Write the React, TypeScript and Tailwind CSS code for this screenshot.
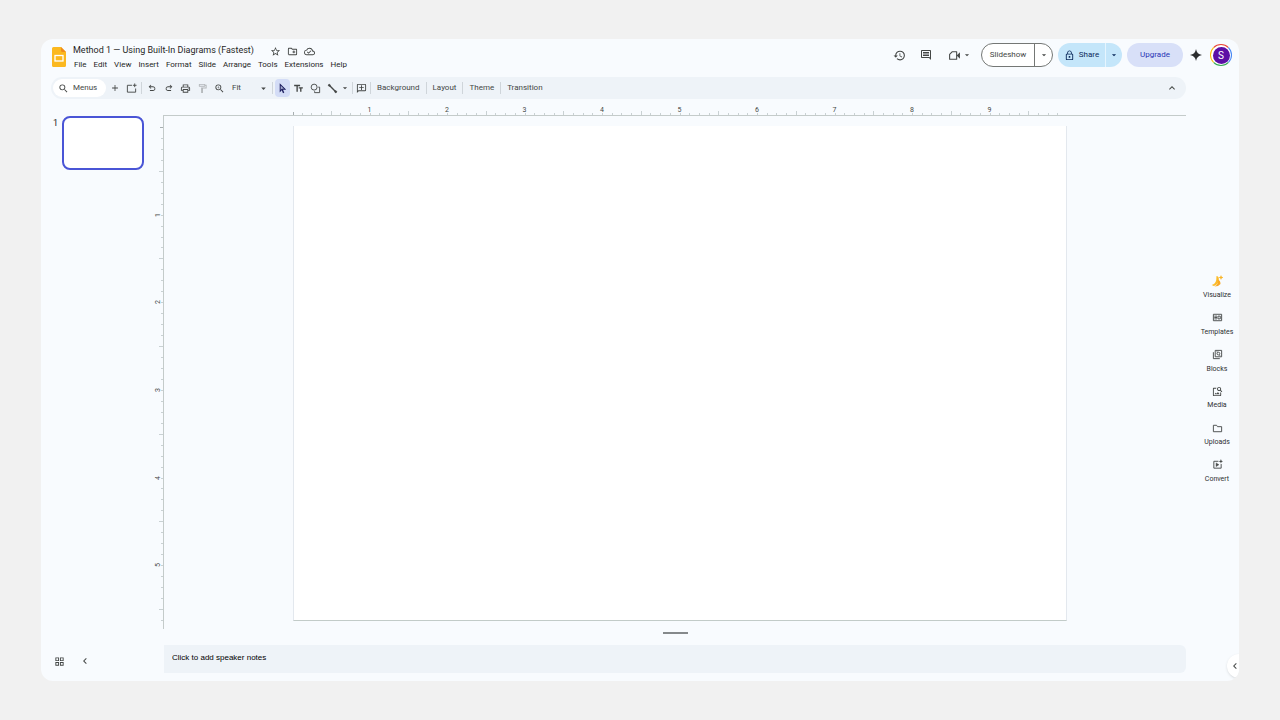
import React from "react";
import {
  MdAdd,
  MdArrowDropDown,
  MdChevronLeft,
  MdExpandLess,
  MdHistory,
  MdLockOutline,
  MdOutlineAddComment,
  MdOutlineCloudDone,
  MdOutlineComment,
  MdOutlineCreateNewFolder,
  MdOutlineFormatPaint,
  MdOutlineGridView,
  MdOutlineImageSearch,
  MdOutlinePrint,
  MdSearch,
  MdStarBorder,
  MdTextFields,
  MdZoomIn,
} from "react-icons/md";

const MENUS = ["File", "Edit", "View", "Insert", "Format", "Slide", "Arrange", "Tools", "Extensions", "Help"];

const UndoIcon = ({ className = "" }: { className?: string }) => (
  <svg viewBox="0 -960 960 960" className={`size-[10px] ${className}`} fill="currentColor">
    <path d="M280-200v-80h284q63 0 109.500-40T720-420q0-60-46.500-100T564-560H312l104 104-56 56-200-200 200-200 56 56-104 104h252q97 0 166.500 63T800-420q0 94-69.500 157T564-200H280Z" />
  </svg>
);

const Stroke = ({ children, className = "size-[11px]" }: { children: React.ReactNode; className?: string }) => (
  <svg viewBox="0 0 24 24" className={className} fill="none" stroke="currentColor" strokeWidth="2">
    {children}
  </svg>
);

const SlidesLogo = () => (
  <svg viewBox="0 0 14 20" className="h-5 w-[14px]">
    <path d="M1.500 0H9l5 5v13.500A1.500 1.500 0 0 1 12.500 20h-11A1.500 1.500 0 0 1 0 18.500v-17A1.500 1.500 0 0 1 1.500 0Z" fill="#fbb81f" />
    <path d="M9 0l5 5H10.500A1.500 1.500 0 0 1 9 3.500Z" fill="#f08c1d" />
    <rect x="3" y="8.500" width="8" height="5.500" fill="none" stroke="#fff" strokeWidth="1.300" />
  </svg>
);

const MeetIcon = () => (
  <svg viewBox="0 0 24 24" className="size-[13px]">
    <path d="M8 5h8v14H3V10Z" fill="none" stroke="currentColor" strokeWidth="2" strokeLinejoin="round" />
    <path d="M16 12l6-6v12Z" fill="currentColor" />
  </svg>
);

const NewSlideIcon = () => (
  <Stroke>
    <path d="M13 5H3v15h18v-8M19 1v8M15 5h8" />
  </Stroke>
);

const ShapeIcon = () => (
  <Stroke>
    <circle cx="9" cy="9" r="6.500" />
    <path d="M18 9h3v12H10V18" />
  </Stroke>
);

const LineIcon = () => (
  <Stroke>
    <path d="M5 5l14 14" strokeWidth="3" />
    <circle cx="5" cy="5" r="2" fill="currentColor" />
    <circle cx="19" cy="19" r="2" fill="currentColor" />
  </Stroke>
);

const PANEL = [
  {
    label: "Visualize",
    icon: (
      <svg viewBox="0 0 24 24" className="size-3">
        <path d="M11 2c3 0 4 2 4.500 4 1 7-2 14-10 16l-4-2c5-1 8-5 9-10Z" fill="#fbbc2c" />
        <path d="M13 9c5 1 6 5 6 9l-5 4-7 1c6-3 8-7 6-14Z" fill="#f9a825" />
        <path d="M20 0l1.500 3.500L25 5l-3.500 1.500L20 10l-1.500-3.500L15 5l3.500-1.500Z" fill="#f9b52a" />
      </svg>
    ),
  },
  {
    label: "Templates",
    icon: (
      <Stroke>
        <path d="M3 5h18v14H3Z" />
        <path d="M5 9h6M5 12h6M5 15h6M13 9h5v6h-5Z" />
      </Stroke>
    ),
  },
  {
    label: "Blocks",
    icon: (
      <Stroke>
        <path d="M7 3h14v14H7ZM3 7v14h14" />
        <circle cx="14" cy="10" r="3" />
        <path d="M10 6h2M16 14h2" />
      </Stroke>
    ),
  },
  { label: "Media", icon: <MdOutlineImageSearch className="size-[11px]" /> },
  {
    label: "Uploads",
    icon: (
      <Stroke>
        <path d="M3 5h7l2 3h9v11H3Z" />
      </Stroke>
    ),
  },
  {
    label: "Convert",
    icon: (
      <Stroke>
        <path d="M14 5H4v15h16v-9" />
        <path d="M9 8.500v8l6-4Z" fill="currentColor" strokeWidth="1" />
        <path d="M19.500 0l1.300 3.700L24.500 5l-3.700 1.300L19.500 10l-1.300-3.700L14.500 5l3.700-1.300Z" fill="currentColor" stroke="none" />
      </Stroke>
    ),
  },
];

const ToolButton = ({ label, children, className = "w-[17px]" }: { label: string; children: React.ReactNode; className?: string }) => (
  <button aria-label={label} className={`flex h-[18px] shrink-0 items-center justify-center ${className}`}>
    {children}
  </button>
);

const Divider = ({ className = "" }: { className?: string }) => <span className={`h-3 w-px shrink-0 bg-[#cfd5da] ${className}`} />;

function Header() {
  return (
    <header className="flex h-[38px] shrink-0 items-start pl-[11px] pr-[7px]">
      <a href="#home" aria-label="Slides home" className="mt-2">
        <SlidesLogo />
      </a>
      <div className="ml-[7px] mt-[5px]">
        <div className="flex h-[14px] items-center text-[#444746]">
          <h1 className="mr-4 whitespace-nowrap text-[9px] text-[#1f1f1f]">
            Method 1 — Using Built-In Diagrams (Fastest)
          </h1>
          <button aria-label="Star" className="mr-[6px]"><MdStarBorder className="size-[11px]" /></button>
          <button aria-label="Move" className="mr-[6px]"><MdOutlineCreateNewFolder className="size-[11px]" /></button>
          <button aria-label="Saved to cloud"><MdOutlineCloudDone className="size-[11px]" /></button>
        </div>
        <nav className="ml-px flex h-[14px] items-center gap-[7px] text-[8px] text-[#1f1f1f]">
          {MENUS.map((m) => (
            <button key={m}>{m}</button>
          ))}
        </nav>
      </div>
      <div className="ml-auto mt-1 flex h-6 shrink-0 items-center text-[8px] text-[#444746]">
        <button aria-label="History" className="mr-[14px]"><MdHistory className="size-[13px]" /></button>
        <button aria-label="Comments" className="mr-4"><MdOutlineComment className="size-3" /></button>
        <button aria-label="Meet" className="mr-[9px] flex items-center gap-px">
          <MeetIcon />
          <MdArrowDropDown className="size-[10px]" />
        </button>
        <div className="mr-[5px] flex h-6 w-[72px] rounded-full border border-[#747775] bg-white">
          <button className="flex-1 border-r border-[#747775]">Slideshow</button>
          <button aria-label="Slideshow options" className="flex w-[17px] items-center justify-center"><MdArrowDropDown className="size-[10px]" /></button>
        </div>
        <div className="mr-[5px] flex h-6 w-16 rounded-full bg-[#c4e6fa] text-[#0b2a5b]">
          <button className="flex flex-1 items-center justify-center gap-1 border-r border-[#e6f5fe]">
            <MdLockOutline className="size-[11px]" />
            Share
          </button>
          <button aria-label="Share options" className="flex w-4 items-center justify-center pr-px"><MdArrowDropDown className="size-[10px]" /></button>
        </div>
        <button className="mr-[7px] h-6 w-14 rounded-full bg-[#d8e0f8] text-[#2a35b5]">Upgrade</button>
        <button aria-label="Gemini" className="mr-2 text-[#2b2d2f]">
          <svg viewBox="0 0 24 24" className="size-3" fill="currentColor">
            <path d="M12 0c1 7 5 11 12 12-7 1-11 5-12 12-1-7-5-11-12-12 7-1 11-5 12-12Z" />
          </svg>
        </button>
        <button aria-label="Account" className="flex size-[22px] items-center justify-center rounded-full border border-t-[#ea4335] border-r-[#4285f4] border-b-[#34a853] border-l-[#fbbc04] bg-white">
          <span className="flex size-[17px] items-center justify-center rounded-full bg-[#5b0fa5] text-[10px] text-white">S</span>
        </button>
      </div>
    </header>
  );
}

function Toolbar() {
  return (
    <div className="ml-[10px] mr-[53px] flex h-[22px] shrink-0 items-center rounded-full bg-[#eef3f8] pl-[2px] pr-2 text-[8px] text-[#444746]">
      <button className="flex h-[18px] w-[53px] items-center gap-1 rounded-full bg-white pl-[5px]">
        <MdSearch className="size-[11px]" />
        Menus
      </button>
      <ToolButton label="Add"><MdAdd className="size-[10px]" /></ToolButton>
      <ToolButton label="New slide"><NewSlideIcon /></ToolButton>
      <Divider className="mx-px" />
      <ToolButton label="Undo"><UndoIcon /></ToolButton>
      <ToolButton label="Redo"><UndoIcon className="-scale-x-100" /></ToolButton>
      <ToolButton label="Print"><MdOutlinePrint className="size-[11px]" /></ToolButton>
      <ToolButton label="Paint format"><MdOutlineFormatPaint className="size-[11px] text-[#b3b7ba]" /></ToolButton>
      <ToolButton label="Zoom"><MdZoomIn className="size-[11px]" /></ToolButton>
      <button className="flex w-[41px] items-center justify-between pl-1">
        Fit
        <MdArrowDropDown className="size-[11px]" />
      </button>
      <Divider className="ml-[3px] mr-[2px]" />
      <ToolButton label="Select" className="w-[15px] rounded-sm bg-[#d3dcf6] text-[#1b1c5e]">
        <svg viewBox="0 0 24 24" className="size-[11px]" fill="none" stroke="currentColor" strokeWidth="2.200">
          <path d="M7 3v15l4-4.500h6.500Z" fill="currentColor" fillOpacity=".25" />
          <path d="M11 13.500l3.500 8" strokeWidth="3" />
        </svg>
      </ToolButton>
      <ToolButton label="Text box"><MdTextFields className="size-[11px]" /></ToolButton>
      <ToolButton label="Shape"><ShapeIcon /></ToolButton>
      <ToolButton label="Line"><LineIcon /></ToolButton>
      <ToolButton label="Line options" className="w-2"><MdArrowDropDown className="size-[10px] shrink-0" /></ToolButton>
      <Divider className="ml-[3px]" />
      <ToolButton label="Add comment"><MdOutlineAddComment className="size-[11px] -scale-x-100" /></ToolButton>
      <Divider className="mr-[6px]" />
      <button>Background</button>
      <Divider className="mx-[6px]" />
      <button>Layout</button>
      <Divider className="mx-[6px]" />
      <button>Theme</button>
      <Divider className="mx-[6px]" />
      <button>Transition</button>
      <button aria-label="Hide menus" className="ml-auto"><MdExpandLess className="size-3" /></button>
    </div>
  );
}

function HorizontalRuler() {
  return (
    <div className="flex h-[17px] shrink-0 border-b border-[#c4cbca] pl-[129px] pr-[119px]">
      <div className="flex flex-1 items-end">
        <span className="-mr-px h-[3px] w-px bg-[#a7aeb0]" />
        {Array.from({ length: 79 }, (_, i) => i + 1).map((n) => (
          <span
            key={n}
            className={`relative flex-1 border-r border-[#c9d1d3] ${n % 8 === 4 ? "h-1" : "h-[2px]"}`}
          >
            {n % 8 === 0 && (
              <span className="absolute -right-[6px] bottom-[1px] w-3 text-center text-[7px] leading-[8px] text-[#444746]">{n / 8}</span>
            )}
          </span>
        ))}
        <span className="flex-1" />
      </div>
    </div>
  );
}

function VerticalRuler() {
  return (
    <div className="flex w-3 shrink-0 flex-col items-end border-r border-[#c4cbca] pb-2 pt-3">
      <span className="h-px w-[3px] bg-[#a7aeb0]" />
      {Array.from({ length: 45 }, (_, i) => i + 1).map((n) => (
        <span
          key={n}
          className={`relative flex-1 border-b border-[#c9d1d3] ${n % 8 === 4 ? "w-1" : "w-[2px]"}`}
        >
          {n % 8 === 0 && (
            <span className="absolute -bottom-1 right-px h-2 w-2 -rotate-90 text-center text-[7px] leading-[8px] text-[#444746]">{n / 8}</span>
          )}
        </span>
      ))}
    </div>
  );
}

export default function App() {
  return (
    <div className="flex min-h-screen bg-[#f1f1f1] px-[41px] py-[39px] font-['Roboto','Liberation_Sans',sans-serif]">
      <div className="relative flex min-w-0 flex-1 flex-col overflow-hidden rounded-xl bg-[#f8fbfe]">
        <Header />
        <Toolbar />
        <div className="flex min-h-0 flex-1">
          <aside className="flex w-[123px] shrink-0 flex-col">
            <div className="flex flex-1 pt-4">
              <ol className="flex-1 pt-px">
                <li className="flex gap-1">
                  <span className="w-[17px] pt-px text-right text-[9px] leading-3 text-[#1f1f1f]">1</span>
                  <button aria-label="Slide 1" className="h-[54px] w-[82px] shrink-0 rounded-lg border-2 border-[#4a55d6] bg-white" />
                </li>
              </ol>
              <VerticalRuler />
            </div>
            <div className="flex h-[52px] items-center gap-[14px] pl-[13px] pt-3 text-[#444746]">
              <button aria-label="Grid view"><MdOutlineGridView className="size-[11px]" /></button>
              <button aria-label="Hide filmstrip"><MdChevronLeft className="size-3" /></button>
            </div>
          </aside>
          <main className="flex min-w-0 flex-1 flex-col">
            <HorizontalRuler />
            <div className="flex flex-1 pb-2 pl-[129px] pr-[119px] pt-[10px]">
              <section aria-label="Slide canvas" className="flex-1 border-x border-b border-x-[#e3e8ee] border-b-[#c2cbc8] bg-white" />
            </div>
            <div className="flex h-4 shrink-0 justify-center pt-[3px]">
              <span className="h-[2px] w-[25px] bg-[#85898b]" />
            </div>
            <div className="mb-2 flex h-7 shrink-0 items-center rounded-r-md bg-[#eef3f8] pl-2">
              <input
                aria-label="Speaker notes"
                placeholder="Click to add speaker notes"
                className="w-full bg-transparent pb-[2px] font-['Liberation_Sans',sans-serif] text-[8px] text-black outline-none placeholder:text-black"
              />
            </div>
          </main>
          <aside className="flex w-[53px] shrink-0 flex-col pl-[9px] pt-[176px]">
            <div className="flex h-[209px] flex-col justify-between text-[7px] text-[#2d2f31]">
              {PANEL.map((p) => (
                <button key={p.label} className="flex flex-col items-center gap-[3px] leading-[10px]">
                  <span className="flex h-3 items-center text-[#444746]">{p.icon}</span>
                  {p.label}
                </button>
              ))}
            </div>
          </aside>
        </div>
        <button aria-label="Show side panel" className="absolute -right-3 bottom-[3px] flex size-6 items-center rounded-full bg-white pl-[2px] text-[#444746] shadow">
          <MdChevronLeft className="size-3" />
        </button>
      </div>
    </div>
  );
}
